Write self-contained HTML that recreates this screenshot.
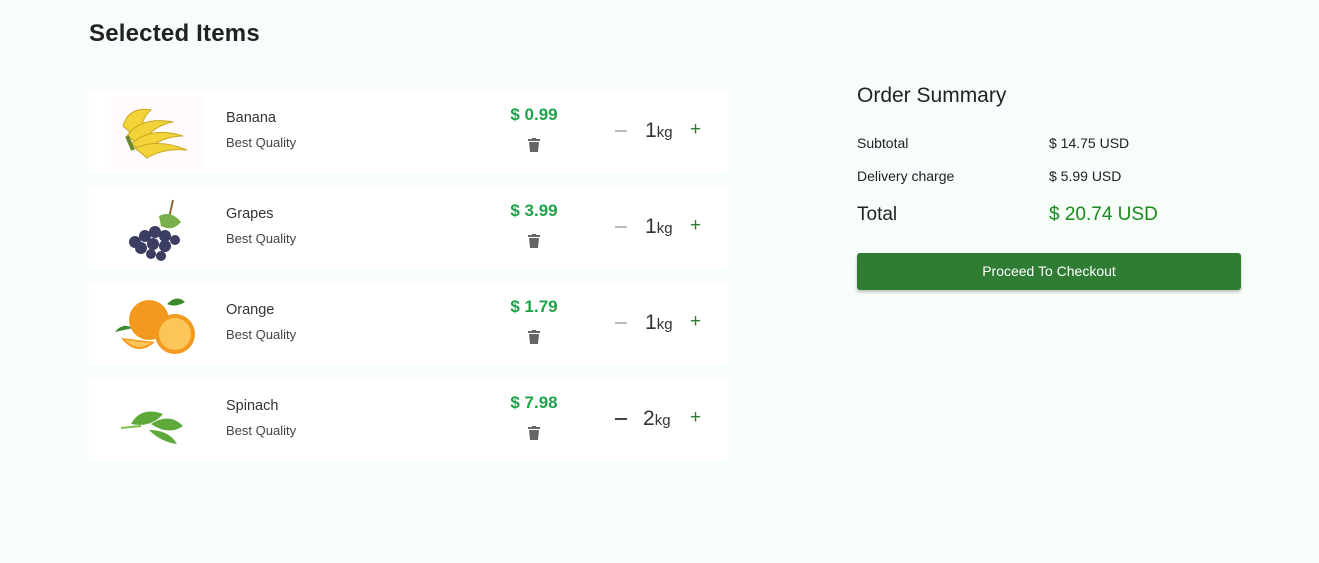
<!DOCTYPE html>
<html><head><style>
body{margin:0;background:#f7fdf9;font-family:"Liberation Sans",sans-serif;width:1319px;height:563px;overflow:hidden;position:relative;color:#222}
h1{position:absolute;left:89px;top:20px;margin:0;font-size:24px;font-weight:600;color:#222;letter-spacing:0.2px}
.card{position:absolute;left:89px;width:640px;height:83px;background:#fff;border-radius:4px}
.img{position:absolute;left:22px;top:6px;width:92px;height:72px}
.name{position:absolute;left:137px;top:20px;font-size:14.5px;color:#333}
.q{position:absolute;left:137px;top:45px;font-size:13px;color:#444}
.price{position:absolute;left:400px;width:90px;text-align:center;top:15px;font-size:17px;color:#1fa34a;font-weight:600}
.trash{position:absolute;left:439px;top:48px}
.minus{position:absolute;left:526px;top:40px;width:12px;height:2px;background:#bbb}
.qty{position:absolute;left:556px;top:29px;font-size:21px;color:#333}
.qty small{font-size:15px}
.plus{position:absolute;left:601px;top:29px;font-size:19px;color:#2e7d32}
.os{position:absolute;left:857px;top:84px;font-size:21px;color:#222}
.r{position:absolute;font-size:14px;color:#222}
.btn{position:absolute;left:857px;top:253px;width:384px;height:37px;background:#2e7d32;border-radius:3px;color:#fff;font-size:14px;text-align:center;line-height:36px;box-shadow:0 2px 3px rgba(0,0,0,.25)}
</style></head><body>
<h1>Selected Items</h1>

<div class="card" style="top:90px">
<svg class="img" viewBox="0 0 92 72"><rect width="92" height="72" fill="#fffbfd"/><g fill="#f2d43a" stroke="#c9a81c" stroke-width="1"><path d="M12 30 Q18 10 40 14 Q30 22 28 44 Z"/><path d="M16 40 Q30 20 62 26 Q40 30 30 50 Z"/><path d="M20 48 Q40 30 72 40 Q50 40 34 56 Z"/><path d="M24 52 Q48 42 76 54 Q52 52 36 62 Z"/></g><path d="M16 40 L22 54" stroke="#6b8a2a" stroke-width="4"/></svg>
<div class="name">Banana</div><div class="q">Best Quality</div>
<div class="price">$ 0.99</div>
<svg class="trash" width="12" height="14" viewBox="0 0 12 14"><rect x="0" y="1" width="12" height="2" fill="#666"/><rect x="4" y="0" width="4" height="2" fill="#666"/><path d="M1 4h10l-1 10H2z" fill="#666"/></svg>
<div class="minus"></div><div class="qty">1<small>kg</small></div><div class="plus">+</div>
</div>

<div class="card" style="top:186px">
<svg class="img" viewBox="0 0 92 72"><path d="M62 8 L58 26" stroke="#8a6a3a" stroke-width="2"/><path d="M48 24 Q60 18 70 30 Q62 40 50 34Z" fill="#7ab04a"/><g fill="#3b3d62"><circle cx="24" cy="50" r="6"/><circle cx="34" cy="44" r="6"/><circle cx="44" cy="40" r="6"/><circle cx="54" cy="44" r="6"/><circle cx="30" cy="56" r="6"/><circle cx="42" cy="52" r="6"/><circle cx="54" cy="54" r="6"/><circle cx="64" cy="48" r="5"/><circle cx="40" cy="62" r="5"/><circle cx="50" cy="64" r="5"/></g></svg>
<div class="name">Grapes</div><div class="q">Best Quality</div>
<div class="price">$ 3.99</div>
<svg class="trash" width="12" height="14" viewBox="0 0 12 14"><rect x="0" y="1" width="12" height="2" fill="#666"/><rect x="4" y="0" width="4" height="2" fill="#666"/><path d="M1 4h10l-1 10H2z" fill="#666"/></svg>
<div class="minus"></div><div class="qty">1<small>kg</small></div><div class="plus">+</div>
</div>

<div class="card" style="top:282px">
<svg class="img" viewBox="0 0 92 72"><path d="M4 44 Q12 34 22 40Z" fill="#3c8a2a"/><path d="M56 16 Q66 6 74 14 Q64 20 56 16Z" fill="#3c8a2a"/><circle cx="38" cy="32" r="20" fill="#f39a1e"/><circle cx="64" cy="46" r="20" fill="#f39a1e"/><circle cx="64" cy="46" r="16" fill="#fbc55a"/><path d="M10 50 Q26 70 44 54Z" fill="#f39a1e"/><path d="M14 52 Q26 64 40 55Z" fill="#fbc55a"/></svg>
<div class="name">Orange</div><div class="q">Best Quality</div>
<div class="price">$ 1.79</div>
<svg class="trash" width="12" height="14" viewBox="0 0 12 14"><rect x="0" y="1" width="12" height="2" fill="#666"/><rect x="4" y="0" width="4" height="2" fill="#666"/><path d="M1 4h10l-1 10H2z" fill="#666"/></svg>
<div class="minus"></div><div class="qty">1<small>kg</small></div><div class="plus">+</div>
</div>

<div class="card" style="top:378px">
<svg class="img" viewBox="0 0 92 72"><g fill="#5fa83a"><path d="M20 40 Q30 22 52 30 Q40 44 20 40Z"/><path d="M40 40 Q58 28 72 42 Q58 52 40 40Z"/><path d="M38 46 Q50 58 66 60 Q58 46 38 46Z"/><path d="M10 44 L30 42" stroke="#7cc04a" stroke-width="2"/></g></svg>
<div class="name">Spinach</div><div class="q">Best Quality</div>
<div class="price">$ 7.98</div>
<svg class="trash" width="12" height="14" viewBox="0 0 12 14"><rect x="0" y="1" width="12" height="2" fill="#666"/><rect x="4" y="0" width="4" height="2" fill="#666"/><path d="M1 4h10l-1 10H2z" fill="#666"/></svg>
<div class="minus" style="background:#444"></div><div class="qty" style="left:554px">2<small>kg</small></div><div class="plus">+</div>
</div>

<div class="os">Order Summary</div>
<div class="r" style="left:857px;top:135px">Subtotal</div>
<div class="r" style="left:1049px;top:135px">$ 14.75 USD</div>
<div class="r" style="left:857px;top:168px">Delivery charge</div>
<div class="r" style="left:1049px;top:168px">$ 5.99 USD</div>
<div class="r" style="left:857px;top:204px;font-size:19px">Total</div>
<div class="r" style="left:1049px;top:204px;font-size:19px;color:#1a8a1a">$ 20.74 USD</div>
<div class="btn">Proceed To Checkout</div>
</body></html>
